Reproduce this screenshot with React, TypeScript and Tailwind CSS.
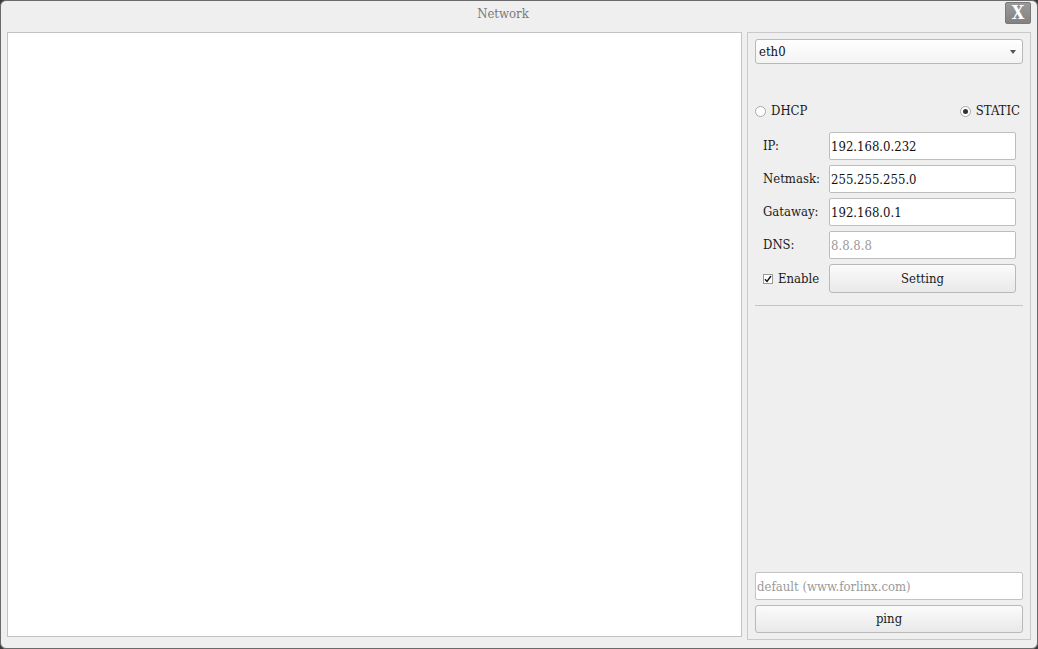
import { useState } from "react";

type FieldProps = {
  label: string;
  value?: string;
  placeholder?: string;
};

const Field = ({ label, value, placeholder }: FieldProps) => (
  <div className="flex items-center h-[28px]">
    <span className="w-[74px] pl-[8px] text-[#1a1a1a]">{label}</span>
    <input
      className="w-[187px] h-[28px] bg-white border border-[#bdbdbd] rounded-[2px] px-[1px] text-[#111] placeholder:text-[#9a9a9a] outline-none"
      defaultValue={value}
      placeholder={placeholder}
    />
  </div>
);

const Radio = ({ label, checked }: { label: string; checked?: boolean }) => (
  <label className="flex items-center gap-[5px]">
    <span className="w-[11px] h-[11px] rounded-full border border-[#a9a9a9] bg-white flex items-center justify-center">
      {checked && <span className="w-[5px] h-[5px] rounded-full bg-[#333]" />}
    </span>
    <span className="text-[#1a1a1a]">{label}</span>
  </label>
);

export default function App() {
  const [enabled, setEnabled] = useState(true);

  return (
    <div
      className="w-[1038px] h-[649px] bg-[#3c3c3c] text-[13px]"
      style={{ fontFamily: '"DejaVu Serif Condensed", "DejaVu Serif", serif' }}
    >
      <div className="w-full h-full bg-[#efefef] border border-[#6a6a6a] rounded-[6px] flex flex-col">
        {/* title bar */}
        <div className="h-[31px] flex items-start pr-[6px] pt-[1px]">
          <span className="flex-1 text-center text-[#7a7a7a] pt-[2px]">Network</span>
          <button className="w-[26px] h-[22px] rounded-[2px] border border-[#7a7a7a] bg-gradient-to-b from-[#9a9a9a] to-[#828282] text-white font-bold text-[18px] leading-none flex items-center justify-center">
            X
          </button>
        </div>

        <div className="flex gap-[5px] pl-[6px]">
          {/* output area */}
          <div className="w-[735px] h-[605px] bg-white border border-[#c3c3c3]" />

          {/* settings panel */}
          <div className="w-[284px] h-[608px] border border-[#c9c9c9] bg-[#efefef] px-[7px] pt-[6px] pb-[6px] flex flex-col">
            <div className="h-[25px] rounded-[3px] border border-[#b9b9b9] bg-gradient-to-b from-white to-[#f3f3f3] flex items-center justify-between pl-[3px] pr-[6px] text-[#111]">
              <span>eth0</span>
              <span className="w-0 h-0 border-l-[3px] border-r-[3px] border-t-[4px] border-l-transparent border-r-transparent border-t-[#555]" />
            </div>

            <div className="mt-[38px] h-[18px] flex items-center justify-between pr-[3px]">
              <Radio label="DHCP" />
              <Radio label="STATIC" checked />
            </div>

            <div className="mt-[12px] flex flex-col gap-[5px]">
              <Field label="IP:" value="192.168.0.232" />
              <Field label="Netmask:" value="255.255.255.0" />
              <Field label="Gataway:" value="192.168.0.1" />
              <Field label="DNS:" placeholder="8.8.8.8" />
              <div className="flex items-center h-[29px]">
                <label
                  className="w-[74px] pl-[8px] flex items-center gap-[5px] text-[#1a1a1a]"
                  onClick={() => setEnabled(!enabled)}
                >
                  <span className="w-[10px] h-[10px] border border-[#9a9a9a] bg-white flex items-center justify-center">
                    {enabled && (
                      <svg width="8" height="8" viewBox="0 0 8 8">
                        <path d="M1 4.2 L3 6.5 L7 1" fill="none" stroke="#111" strokeWidth="1.4" />
                      </svg>
                    )}
                  </span>
                  Enable
                </label>
                <button className="w-[187px] h-[29px] rounded-[3px] border border-[#b9b9b9] bg-gradient-to-b from-[#fbfbfb] to-[#e9e9e9] text-[#1a1a1a]">
                  Setting
                </button>
              </div>
            </div>

            <div className="mt-[12px] h-px bg-[#c4c4c4]" />

            <div className="mt-auto flex flex-col gap-[5px]">
              <input
                className="h-[28px] bg-white border border-[#c3c3c3] rounded-[2px] px-[1px] placeholder:text-[#9a9a9a] outline-none"
                placeholder="default (www.forlinx.com)"
              />
              <button className="h-[28px] rounded-[3px] border border-[#b9b9b9] bg-gradient-to-b from-[#fbfbfb] to-[#e9e9e9] text-[#1a1a1a]">
                ping
              </button>
            </div>
          </div>
        </div>
      </div>
    </div>
  );
}
